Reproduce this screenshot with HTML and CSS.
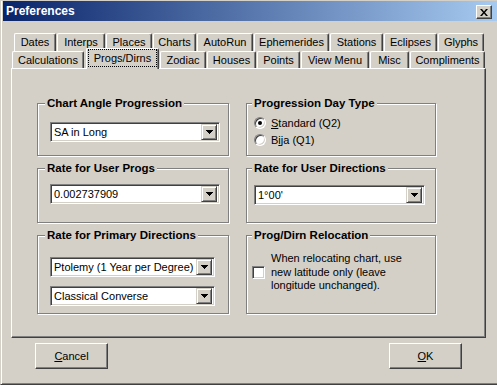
FILE: index.html
```
<html>
<head>
    <title>Preferences</title>
<link rel="stylesheet" href="styles.css">
</head>
<body>
<div class="window">
    <div class="titlebar">
        <span class="title">Preferences</span>
        <span class="closebtn"><svg width="8" height="7" viewBox="0 0 8 7"><path d="M0 0h2l2 2.4 2-2.4h2L5 3.5 8 7H6L4 4.6 2 7H0l3-3.5z"/></svg></span>
    </div>
    <div class="content">
        <div class="tabs">
            <div class="tabrow back">
                <div class="tab t-dates">Dates</div>
                <div class="tab t-interps">Interps</div>
                <div class="tab t-places">Places</div>
                <div class="tab t-charts">Charts</div>
                <div class="tab t-autorun">AutoRun</div>
                <div class="tab t-ephem">Ephemerides</div>
                <div class="tab t-stations">Stations</div>
                <div class="tab t-eclipses">Eclipses</div>
                <div class="tab t-glyphs">Glyphs</div>
            </div>
            <div class="tabrow front">
                <div class="tab t-calc">Calculations</div>
                <div class="tab t-progs active"><span class="focus">Progs/Dirns</span></div>
                <div class="tab t-zodiac">Zodiac</div>
                <div class="tab t-houses">Houses</div>
                <div class="tab t-points">Points</div>
                <div class="tab t-view">View Menu</div>
                <div class="tab t-misc">Misc</div>
                <div class="tab t-compl">Compliments</div>
            </div>
        </div>
        <div class="panel">
            <div class="group left">
                <div class="group-title">Chart Angle Progression</div>
                <div class="group-body g-angle">
                    <div class="combo wide"><span class="val">SA in Long</span><span class="arrow"><svg width="7" height="4" viewBox="0 0 7 4"><path d="M0 0h7L3.5 4z"/></svg></span></div>
                </div>
            </div>
            <div class="group right">
                <div class="group-title">Progression Day Type</div>
                <div class="group-body g-day">
                    <label class="radio-row"><span class="radio checked"></span><span><u>S</u>tandard (Q2)</span></label>
                    <label class="radio-row"><span class="radio"></span><span>B<u>i</u>ja (Q1)</span></label>
                </div>
            </div>
            <div class="group left">
                <div class="group-title">Rate for User Progs</div>
                <div class="group-body g-userprogs">
                    <div class="combo wide"><span class="val">0.002737909</span><span class="arrow"><svg width="7" height="4" viewBox="0 0 7 4"><path d="M0 0h7L3.5 4z"/></svg></span></div>
                </div>
            </div>
            <div class="group right">
                <div class="group-title">Rate for User Directions</div>
                <div class="group-body g-userdirs">
                    <div class="combo widest"><span class="val">1°00'</span><span class="arrow"><svg width="7" height="4" viewBox="0 0 7 4"><path d="M0 0h7L3.5 4z"/></svg></span></div>
                </div>
            </div>
            <div class="group left">
                <div class="group-title">Rate for Primary Directions</div>
                <div class="group-body g-primary">
                    <div class="combo narrow"><span class="val">Ptolemy (1 Year per Degree)</span><span class="arrow"><svg width="7" height="4" viewBox="0 0 7 4"><path d="M0 0h7L3.5 4z"/></svg></span></div>
                    <div class="combo narrow"><span class="val">Classical Converse</span><span class="arrow"><svg width="7" height="4" viewBox="0 0 7 4"><path d="M0 0h7L3.5 4z"/></svg></span></div>
                </div>
            </div>
            <div class="group right">
                <div class="group-title">Prog/Dirn Relocation</div>
                <div class="group-body g-reloc">
                    <label class="check-row"><span class="checkbox"></span><span class="check-text">When relocating chart, use<br>new latitude only (leave<br>longitude unchanged).</span></label>
                </div>
            </div>
        </div>
        <div class="buttons">
            <div class="button"><span><u>C</u>ancel</span></div>
            <div class="button"><span><u>O</u>K</span></div>
        </div>
    </div>
</div>
</body>
</html>
```
FILE: styles.css
```
* {
    box-sizing: border-box;
}
body {
    margin: 0;
    background: #d4d0c8;
    color: #000;
    font-family: "Liberation Sans", Arial, sans-serif;
    font-size: 11px;
    overflow: hidden;
}
.window {
    width: 497px;
    height: 385px;
    padding: 0 0 0 2px;
    border-left: 1px solid #d4d0c8;
    border-top: 1px solid #d4d0c8;
    border-bottom: 1px solid #404040;
    box-shadow: inset 1px 0 #fff, inset 0 -1px #808080;
}

/* title bar */
.titlebar {
    height: 20px;
    display: flex;
    align-items: center;
    justify-content: space-between;
    padding: 0 5px 0 3px;
    background: linear-gradient(to right, #0a246a, #a6caf0);
}
.title {
    color: #fff;
    font-weight: bold;
    font-size: 12px;
}
.closebtn {
    width: 16px;
    height: 14px;
    margin-top: 2px;
    display: flex;
    align-items: center;
    justify-content: center;
    background: #d4d0c8;
    border: 1px solid;
    border-color: #fff #404040 #404040 #fff;
    box-shadow: inset -1px -1px #808080;
}

/* tabs */
.content {
    padding: 12px 0 0 8px;
}
.tabrow {
    display: flex;
    align-items: flex-start;
}
.tabrow.back {
    height: 18px;
    padding-left: 3px;
}
.tabrow.front {
    height: 17px;
    padding-left: 1px;
}
.tab {
    height: 18px;
    margin-right: 1px;
    border: 1px solid;
    border-bottom: none;
    border-color: #fff #404040 #fff #fff;
    border-radius: 2px 2px 0 0;
    box-shadow: inset -1px 0 #808080;
    background: #d4d0c8;
    text-align: center;
    line-height: 17px;
    white-space: nowrap;
}
.front .tab {
    height: 17px;
    line-height: 16px;
}
.front .tab.active {
    position: relative;
    z-index: 1;
    height: 21px;
    margin: -3px 1px -1px 1px;
}
.focus {
    display: block;
    height: 18px;
    margin: 0 1px;
    border: 1px dotted #000;
    line-height: 16px;
}
.t-dates { width: 42px; }
.t-interps { width: 48px; }
.t-places { width: 46px; }
.t-charts { width: 43px; }
.t-autorun { width: 56px; }
.t-ephem { width: 75px; }
.t-stations { width: 53px; }
.t-eclipses { width: 53px; }
.t-glyphs { width: 46px; }
.t-calc { width: 72px; }
.t-progs { width: 73px; }
.t-zodiac { width: 46px; }
.t-houses { width: 49px; }
.t-points { width: 43px; }
.t-view { width: 68px; }
.t-misc { width: 39px; }
.t-compl { width: 75px; }

/* page panel */
.panel {
    width: 475px;
    height: 270px;
    padding: 34px 0 0 25px;
    border: 1px solid;
    border-color: #fff #404040 #404040 #fff;
    box-shadow: inset -1px -1px #808080;
    display: grid;
    grid-template-columns: 192px 190px;
    grid-template-rows: 53px 55px 79px;
    column-gap: 17px;
    row-gap: 12px;
    align-content: start;
}
.group {
    border: 1px solid #808080;
    box-shadow: inset 1px 1px #fff, 1px 1px #fff;
}
.group-title {
    width: fit-content;
    margin: -8px 0 0 7px;
    padding: 0 2px;
    font-weight: bold;
    font-size: 11.5px;
    line-height: 14px;
    white-space: nowrap;
    background: #d4d0c8;
}
.right .group-title {
    margin-left: 5px;
}
.g-angle { padding: 12px 0 0 12px; }
.g-userprogs { padding: 9px 0 0 12px; }
.g-primary { padding: 15px 0 0 12px; }
.g-day { padding: 4px 0 0 7px; }
.g-userdirs { padding: 10px 0 0 7px; }
.g-reloc { padding: 10px 0 0 5px; }

/* combo boxes */
.combo {
    height: 20px;
    display: flex;
    align-items: center;
    border: 1px solid;
    border-color: #808080 #fff #fff #808080;
    box-shadow: inset 1px 1px #404040, inset -1px -1px #d4d0c8;
    background: #fff;
    padding: 2px;
}
.combo.wide { width: 170px; }
.combo.widest { width: 171px; }
.combo.narrow { width: 165px; }
.combo.narrow + .combo.narrow { margin-top: 9px; }
.val {
    flex: 1;
    padding-left: 1px;
    white-space: nowrap;
    overflow: hidden;
}
.arrow {
    width: 16px;
    height: 16px;
    display: flex;
    align-items: center;
    justify-content: center;
    background: #d4d0c8;
    border: 1px solid;
    border-color: #d4d0c8 #404040 #404040 #d4d0c8;
    box-shadow: inset 1px 1px #fff, inset -1px -1px #808080;
}
.arrow svg {
    shape-rendering: crispEdges;
}

/* radios and checkbox */
.radio-row {
    display: flex;
    align-items: center;
    height: 17px;
}
.radio {
    width: 12px;
    height: 12px;
    margin-right: 5px;
    border-radius: 50%;
    border: 1px solid;
    border-color: #808080 #fff #fff #808080;
    box-shadow: inset 1px 1px #404040, inset -1px -1px #d4d0c8;
    background: #fff;
    display: flex;
    align-items: center;
    justify-content: center;
}
.radio.checked::after {
    content: "";
    width: 4px;
    height: 4px;
    border-radius: 50%;
    background: #000;
}
.check-row {
    display: flex;
    align-items: center;
}
.checkbox {
    width: 13px;
    height: 13px;
    margin-right: 6px;
    flex: none;
    border: 1px solid;
    border-color: #808080 #fff #fff #808080;
    box-shadow: inset 1px 1px #404040, inset -1px -1px #d4d0c8;
    background: #fff;
}
.check-text {
    line-height: 13.5px;
}

/* buttons */
.buttons {
    width: 427px;
    margin: 5px 0 0 24px;
    display: flex;
    justify-content: space-between;
}
.button {
    width: 73px;
    height: 26px;
    display: flex;
    align-items: center;
    justify-content: center;
    border: 1px solid;
    border-color: #fff #404040 #404040 #fff;
    box-shadow: inset -1px -1px #808080;
    background: #d4d0c8;
}
```
